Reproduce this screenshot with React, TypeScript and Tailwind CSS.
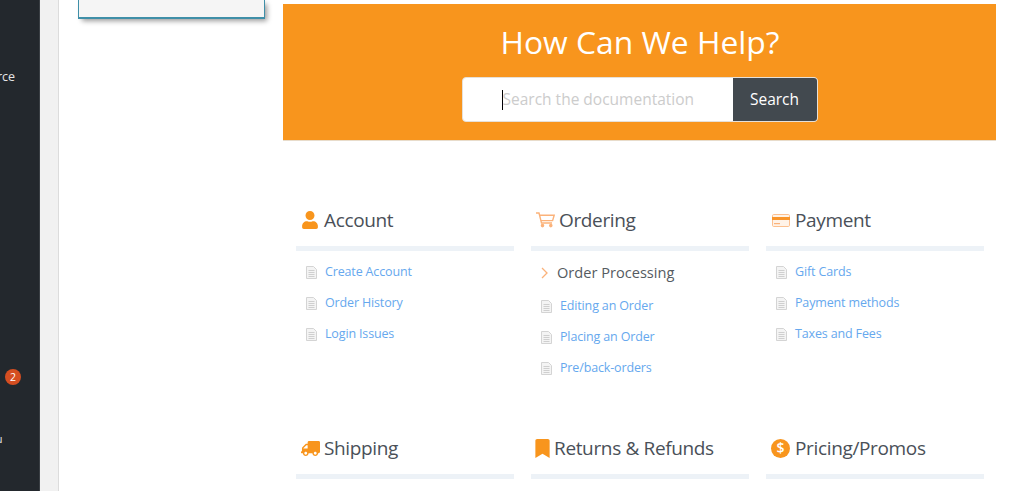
import { FaUser, FaTruck, FaBookmark } from "react-icons/fa";

const Doc = () => (
  <svg width="11" height="13" viewBox="0 0 11 13" className="mb-[1px] shrink-0">
    <path d="M.5.5h7l3 3v9H.5z" fill="#f4f4f4" stroke="#d4d4d4" />
    <path d="M2.5 4.5h6M2.5 6.5h6M2.5 8.5h6M2.5 10.5h6" stroke="#cfcfcf" strokeWidth="1" />
  </svg>
);

const Cart = () => (
  <svg width="19" height="16" viewBox="0 0 19 16" fill="none" stroke="#fbb27a" strokeWidth="1.4">
    <path d="M0 1h3l2.5 10h10.5" />
    <path d="M3.6 3.2h14.6l-1.6 5.4H5" />
    <circle cx="6.5" cy="13.6" r="1.1" fill="#fbb27a" />
    <circle cx="14.8" cy="13.6" r="1.1" fill="#fbb27a" />
  </svg>
);

const Card = () => (
  <svg width="18" height="13" viewBox="0 0 18 13">
    <rect x=".5" y=".5" width="17" height="12" rx="1.2" fill="#fff3e8" stroke="#fcc08f" />
    <rect x="0" y="3" width="18" height="3" fill="#f9952a" />
    <rect x="2" y="9" width="6" height="1.2" fill="#fbb27a" />
  </svg>
);

const Coin = () => (
  <span className="flex h-[19px] w-[19px] items-center justify-center rounded-full bg-[#f8951d] text-[14px] font-semibold leading-none text-white">
    $
  </span>
);

function Heading({ icon, iconBox, title }: { icon: React.ReactNode; iconBox: string; title: string }) {
  return (
    <div className="h-[45px] border-b-[5px] border-[#edf2f7]">
      <div className="flex h-[28px] items-center">
        <div className={`flex shrink-0 items-center justify-center ${iconBox}`}>{icon}</div>
        <h3 className="whitespace-nowrap text-[19px] font-normal leading-none tracking-[-0.35px] text-[#4a5058]">{title}</h3>
      </div>
    </div>
  );
}

function DocLink({ label }: { label: string }) {
  return (
    <li className="flex h-[31px] items-center gap-[8px] pl-[10px]">
      <Doc />
      <a className="text-[12.5px] leading-none tracking-[-0.15px] text-[#66a8ee]">{label}</a>
    </li>
  );
}

export default function App() {
  return (
    <div className="flex h-[491px] w-[1024px] overflow-hidden bg-white font-['Open_Sans','Noto_Sans',sans-serif]">
      <aside className="h-full w-[40px] shrink-0 overflow-hidden border-r border-[#3a3f44] bg-[#23282d] text-[#e6e6e6]">
        <div className="mt-[68px] -ml-[39px] h-[17px] whitespace-nowrap text-[12.5px] leading-[17px]">Resource</div>
        <div className="mt-[284px] ml-[5px] flex h-[16px] w-[16px] items-center justify-center rounded-full bg-[#d54e21] text-[10.5px] leading-none text-white">
          2
        </div>
        <div className="mt-[46px] -ml-[27px] whitespace-nowrap text-[11px] leading-[16px]">Menu</div>
      </aside>
      <div className="h-full w-[19px] shrink-0 border-r border-[#dcdcdc] bg-[#f1f1f1]" />
      <div className="w-[224px] shrink-0">
        <div className="ml-[19px] h-[19px] w-[187px] border-x border-b-2 border-[#3f8fa8] bg-[#f5f5f5] shadow-[3px_3px_5px_-1px_rgba(0,0,0,0.4)]" />
      </div>
      <main className="w-[713px] shrink-0 pt-[4px]">
        <section className="flex h-[137px] flex-col items-center border-b border-[#e8dccb] bg-[#f8951d] pt-[18px]">
          <h1 className="ml-[1px] text-[31.8px] font-normal leading-[40px] text-white">How Can We Help?</h1>
          <div className="mt-[15px] flex h-[45px] w-[356px] overflow-hidden rounded-[4px] border border-[#e6e0d8] bg-white">
            <div className="flex flex-1 items-center pl-[39px] text-[15.5px] text-[#cccccc]">
              <span className="h-[20px] w-px shrink-0 bg-black" />
              <span className="whitespace-nowrap">Search the documentation</span>
            </div>
            <div className="flex w-[84px] items-center justify-center bg-[#42494f] text-[15.5px] text-white">Search</div>
          </div>
        </section>
        <div className="mt-[65px] grid grid-cols-[218px_218px_218px] gap-x-[17px] px-[13px]">
          <div className="h-[228px]">
            <Heading title="Account" iconBox="w-[28px]" icon={<FaUser size={18} color="#f8951d" />} />
            <ul className="mt-[6px]">
              <DocLink label="Create Account" />
              <DocLink label="Order History" />
              <DocLink label="Login Issues" />
            </ul>
          </div>
          <div>
            <Heading title="Ordering" iconBox="w-[28px]" icon={<Cart />} />
            <ul className="mt-[6px]">
              <li className="flex h-[34px] items-center gap-[9px] pb-[2px] pl-[10px] text-[14.6px] text-[#555b61]">
                <svg width="7" height="12" viewBox="0 0 7 12" fill="none" stroke="#fbb27a" strokeWidth="1.3">
                  <path d="M1 1l5 5-5 5" />
                </svg>
                Order Processing
              </li>
              <DocLink label="Editing an Order" />
              <DocLink label="Placing an Order" />
              <DocLink label="Pre/back-orders" />
            </ul>
          </div>
          <div>
            <Heading title="Payment" iconBox="w-[29px]" icon={<Card />} />
            <ul className="mt-[6px]">
              <DocLink label="Gift Cards" />
              <DocLink label="Payment methods" />
              <DocLink label="Taxes and Fees" />
            </ul>
          </div>
          <Heading title="Shipping" iconBox="w-[28px]" icon={<FaTruck size={19} color="#f8951d" className="-scale-x-100" />} />
          <Heading title="Returns &amp; Refunds" iconBox="w-[23px]" icon={<FaBookmark size={19} color="#f8951d" />} />
          <Heading title="Pricing/Promos" iconBox="w-[29px]" icon={<Coin />} />
        </div>
      </main>
    </div>
  );
}
